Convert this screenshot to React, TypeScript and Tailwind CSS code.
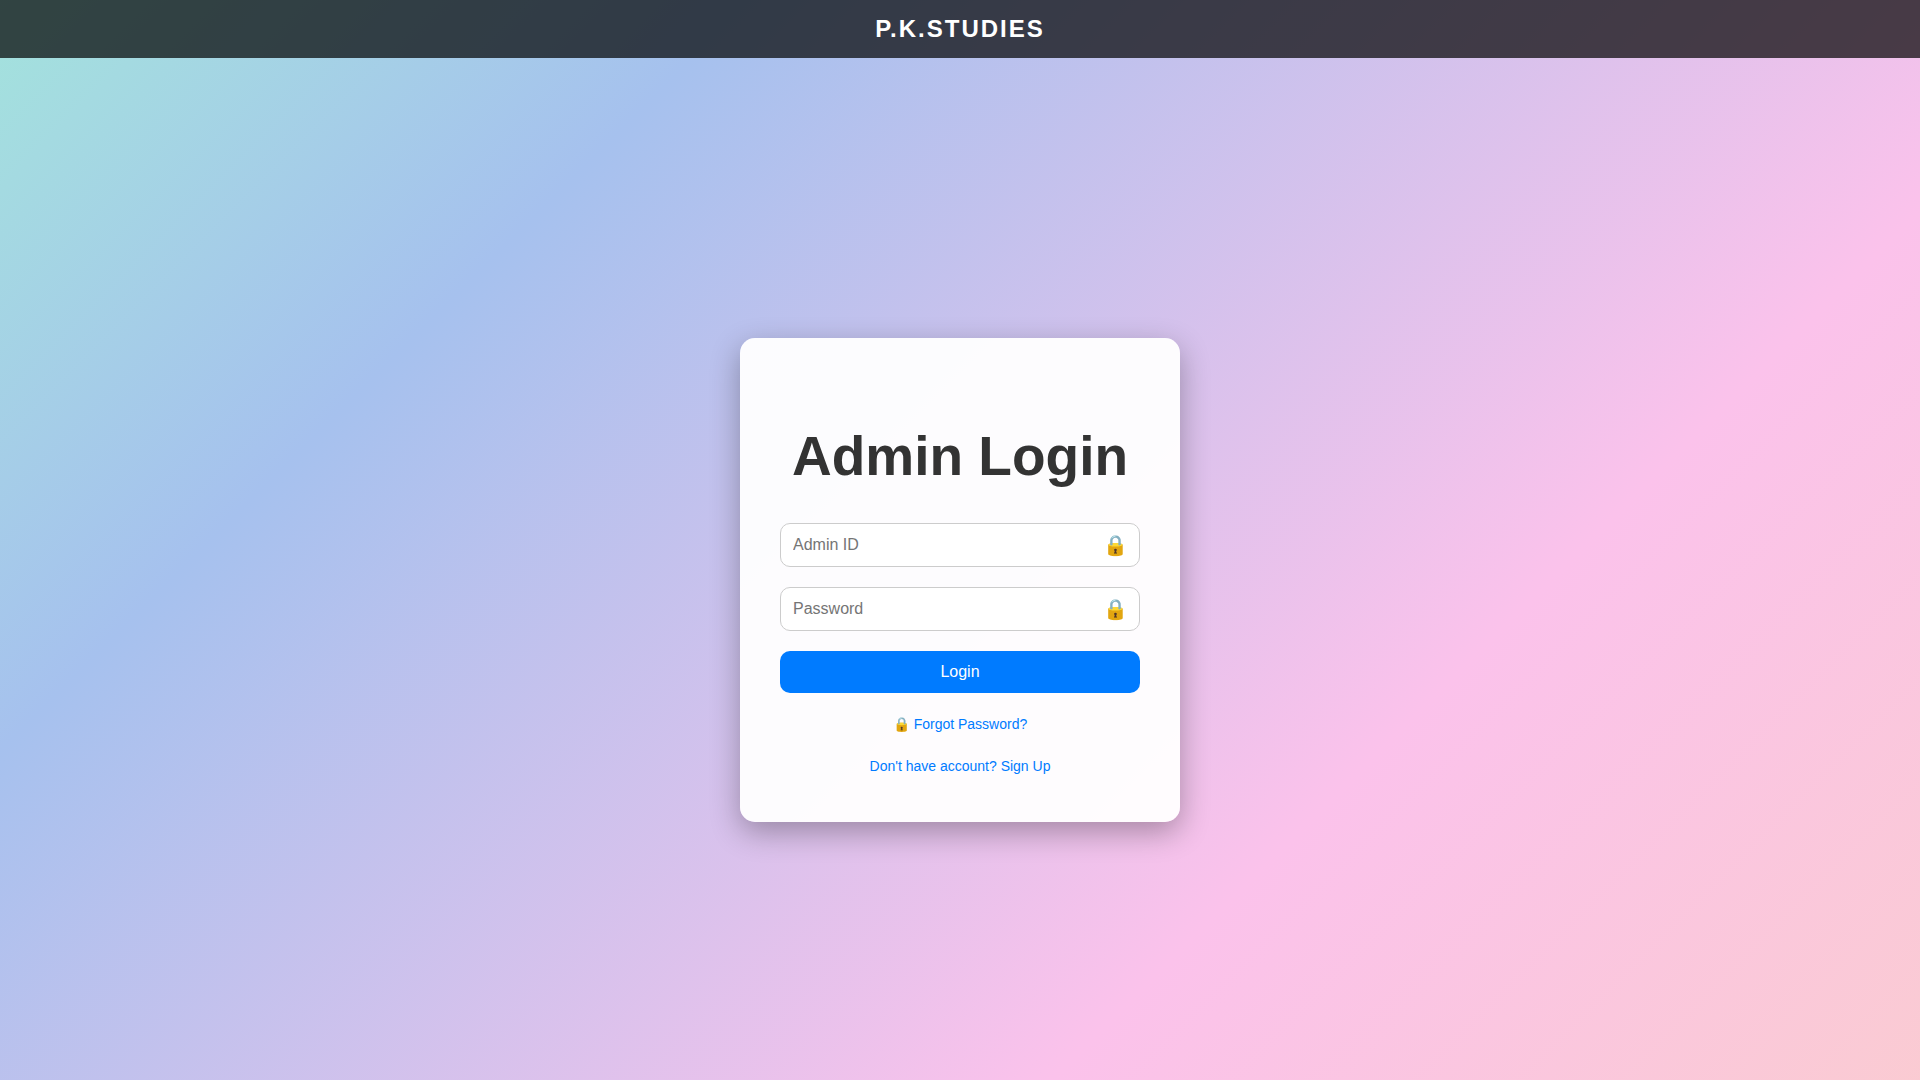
type FieldProps = { id: string; label: string; type: string };

function Field({ id, label, type }: FieldProps) {
  return (
    <div className="relative mb-5">
      <input
        id={id}
        type={type}
        aria-label={label}
        placeholder={label}
        className="block h-11 w-full rounded-[10px] border border-[#cccccc] bg-white px-3 pr-12 text-base text-black placeholder:text-[#757575]"
      />
      <span aria-hidden="true" className="pointer-events-none absolute inset-y-0 right-3 flex items-center text-xl">🔒</span>
    </div>
  );
}

export default function App() {
  return (
    <div className="flex min-h-screen flex-col bg-[linear-gradient(135deg,#a1ffce_-21%,#a6c1ee_25%,#fbc2eb_71%,#fad0c4_117%)] font-['Liberation_Sans',Arial,sans-serif]">
      <header className="bg-black/70 py-[11px] text-center text-2xl leading-9 font-bold tracking-[2px] text-white">
        P.K.STUDIES
      </header>
      <main className="flex flex-1 items-center justify-center px-4 pt-[22px]">
        <form
          className="w-full max-w-[440px] rounded-[15px] bg-white/95 px-10 pt-10 pb-[46px] text-center shadow-[0_10px_30px_rgba(0,0,0,0.3)]"
          onSubmit={(e) => e.preventDefault()}
        >
          <h1 className="mt-[46px] mb-[35px] text-[55px] leading-16 font-bold text-[#333333]">Admin Login</h1>
          <Field id="admin-id" label="Admin ID" type="text" />
          <Field id="password" label="Password" type="password" />
          <button type="submit" className="block h-[42px] w-full rounded-[10px] bg-[#007bff] text-base text-white">
            Login
          </button>
          <div className="mt-[21px] flex flex-col items-center gap-[22px] text-sm text-[#007bff]">
            <a href="#forgot">🔒 Forgot Password?</a>
            <a href="#signup">Don't have account? Sign Up</a>
          </div>
        </form>
      </main>
    </div>
  );
}
